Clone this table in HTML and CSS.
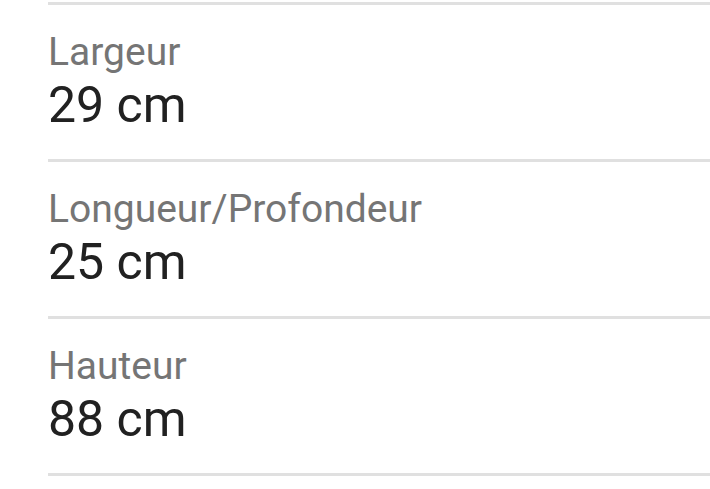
FILE: index.html
```html
<!DOCTYPE html>
<html lang="fr">
<head>
<meta charset="utf-8">
<link rel="stylesheet" href="styles.css">
</head>
<body>
<ul class="specs">
  <li class="spec"><div class="label">Largeur</div><div class="value">29 cm</div></li>
  <li class="spec"><div class="label">Longueur/Profondeur</div><div class="value">25 cm</div></li>
  <li class="spec"><div class="label">Hauteur</div><div class="value">88 cm</div></li>
</ul>
</body>
</html>
```
FILE: styles.css
```css
html, body { margin: 0; padding: 0; background: #fff; }
body { font-family: Roboto, "Noto Sans", sans-serif; }
.specs {
  list-style: none;
  margin: 2px 0 0 48px;
  padding: 0;
  border-top: 3px solid #e0e0e0;
}
.spec {
  height: 157px;
  box-sizing: border-box;
  border-bottom: 3px solid #e0e0e0;
  padding-top: 23px;
}
.label {
  font-size: 39px;
  line-height: 48px;
  color: #757575;
}
.value {
  font-size: 50px;
  line-height: 58px;
  color: #212121;
}
```
